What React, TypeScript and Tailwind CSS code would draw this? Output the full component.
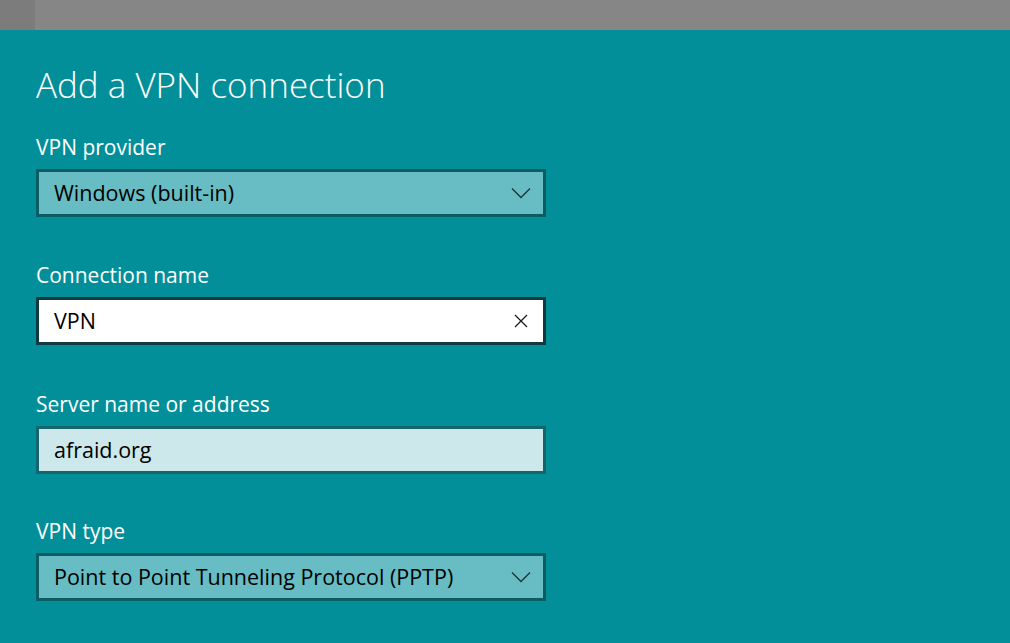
import React from "react";

function Chevron() {
  return (
    <svg width="20" height="12" viewBox="0 0 20 12" className="shrink-0">
      <path d="M1 1.5 L10 10.5 L19 1.5" fill="none" stroke="#1d3436" strokeWidth="1.3" />
    </svg>
  );
}

function Cross() {
  return (
    <svg width="14" height="14" viewBox="0 0 14 14" className="shrink-0">
      <path d="M1 1 L13 13 M13 1 L1 13" fill="none" stroke="#1b1b1b" strokeWidth="1.3" />
    </svg>
  );
}

export default function App() {
  return (
    <div className="w-[1010px] h-[643px] overflow-hidden bg-[#038f99] font-['Open_Sans',sans-serif]">
      <div className="h-[30px] flex">
        <div className="w-[35px] bg-[#7c7c7c]" />
        <div className="flex-1 bg-[#868686]" />
      </div>
      <div className="pl-[36px] w-[546px] box-content">
        <h1 className="mt-[35px] text-[35px] leading-[40px] font-light text-white">Add a VPN connection</h1>

        <div className="mt-[28px] text-[21px] leading-[28px] text-white">VPN provider</div>
        <div className="mt-[8px] h-[48px] w-[510px] border-[3px] border-[#0b5d63] bg-[#67bdc3] flex items-center pl-[15px] pr-[12px]">
          <span className="flex-1 text-[21.5px] text-black">Windows (built-in)</span>
          <Chevron />
        </div>

        <div className="mt-[44px] text-[21px] leading-[28px] text-white">Connection name</div>
        <div className="mt-[8px] h-[48px] w-[510px] border-[3px] border-[#0f3a3e] bg-white flex items-center pl-[15px] pr-[15px]">
          <span className="flex-1 text-[21.5px] text-black">VPN</span>
          <Cross />
        </div>

        <div className="mt-[45px] text-[21px] leading-[28px] text-white">Server name or address</div>
        <div className="mt-[8px] h-[48px] w-[510px] border-[3px] border-[#14666c] bg-[#cce8ea] flex items-center pl-[15px]">
          <span className="flex-1 text-[21.5px] text-black">afraid.org</span>
        </div>

        <div className="mt-[43px] text-[21px] leading-[28px] text-white">VPN type</div>
        <div className="mt-[8px] h-[48px] w-[510px] border-[3px] border-[#0b5d63] bg-[#67bdc3] flex items-center pl-[15px] pr-[12px]">
          <span className="flex-1 text-[21.5px] text-black">Point to Point Tunneling Protocol (PPTP)</span>
          <Chevron />
        </div>
      </div>
    </div>
  );
}
